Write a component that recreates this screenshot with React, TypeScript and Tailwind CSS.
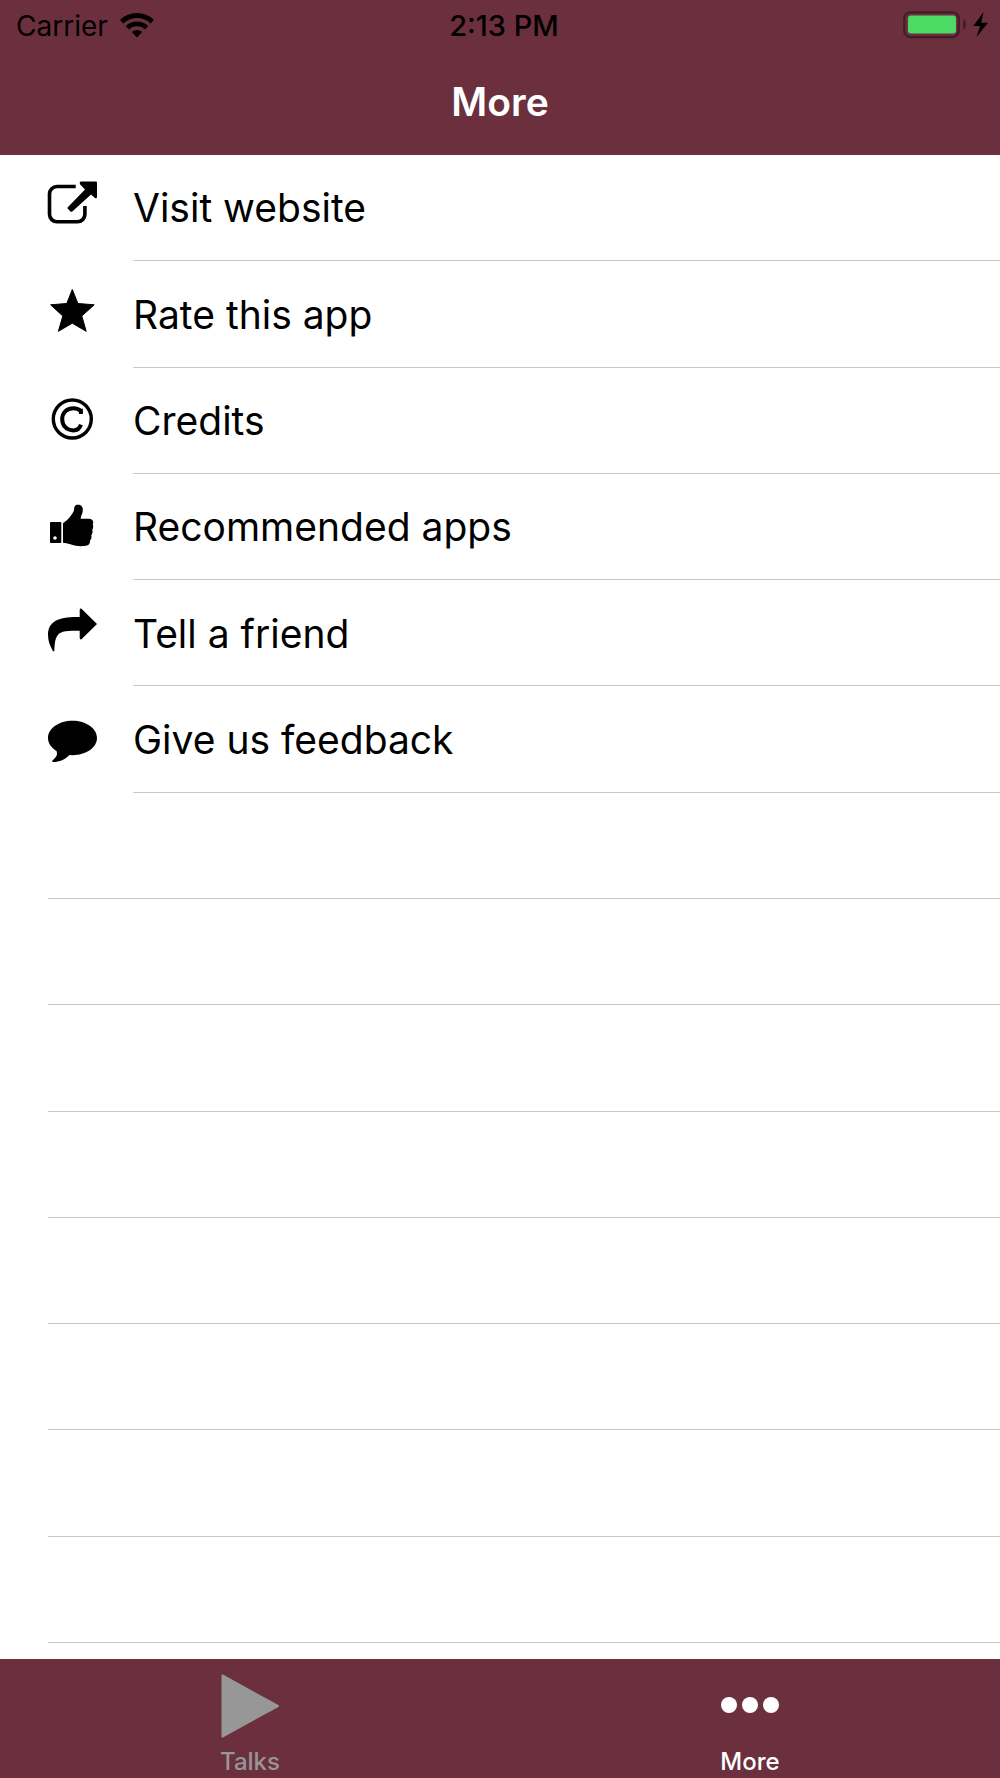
import type { ReactNode } from "react";

interface Item {
  label: string;
  icon: ReactNode;
}

const ITEMS: Item[] = [
  {
    label: "Visit website",
    icon: (
      <>
        <path
          d="M29.7 6.5H11A7.5 7.5 0 0 0 3.5 14V34.3A7.5 7.5 0 0 0 11 41.8H31.4A7.5 7.5 0 0 0 38.9 34.3V26"
          fill="none"
          stroke="currentColor"
          strokeWidth="3.6"
        />
        <path d="M34.8 1.6H50a1 1 0 0 1 1 1V17.2Q50.6 18.8 49 18L45 14.4L26.3 31.6Q24.9 32 24.2 31.2L21.6 28.6Q21.2 27.8 21.8 27.2L39 9.6L34 4.2Q33 2 34.8 1.6Z" />
      </>
    ),
  },
  {
    label: "Rate this app",
    icon: (
      <path
        d="M26.3 3.5L31.9 17.5L48.2 18.8L35.8 30L40.2 45.3L26.3 37.2L12.4 45.3L16.8 30L4.6 18.8L20.8 17.5Z"
        stroke="currentColor"
        strokeLinejoin="round"
      />
    ),
  },
  {
    label: "Credits",
    icon: (
      <g fill="none" stroke="currentColor">
        <circle cx="26.3" cy="26" r="19" strokeWidth="3.4" />
        <path
          d="M34.9 21V15.8M34.9 18.2C33 16 30.3 15.2 27.3 15.2C20.6 15.2 16.2 19.8 16.2 26.2C16.2 32.6 20.6 37.4 27.3 37.4C30.6 37.4 33.6 36 34.9 31.6"
          strokeWidth="4"
        />
      </g>
    ),
  },
  {
    label: "Recommended apps",
    icon: (
      <>
        <path
          fillRule="evenodd"
          d="M5 23H14.3a1 1 0 0 1 1 1V43a1 1 0 0 1-1 1H5a1 1 0 0 1-1-1V24a1 1 0 0 1 1-1ZM9 37.2a1.8 1.8 0 1 0 0 3.6a1.8 1.8 0 0 0 0-3.6Z"
        />
        <path d="M17 24.3C19 22.5 21.5 21 23.3 18.7C25 16.3 27 14 27.8 12C28.3 10 28 8.3 28.8 7.2C30 5.3 34 5.3 35.5 7C37.5 9.3 36.8 12 36.2 14.5C35.5 16.5 34.8 17.5 34.7 19.7H43.5C47 20 47.8 23 46.8 25.5C47.7 27.5 47 29.5 46.3 30.7C47 33 46.3 35 45.3 36.3C45.8 38.5 45.3 40.3 44 41.5C44.3 44.3 43 46 41 46.5C38.5 47.3 33 47.3 30 46.8C25.5 46 21.5 44 17 43.7Z" />
      </>
    ),
  },
  {
    label: "Tell a friend",
    icon: (
      <path d="M33.7 12V5Q33.8 3.2 35.5 3.7L51 19L35.5 34.3Q33.8 34.8 33.7 33V25.8C22 26 15 25.5 11.5 30.5C8.8 34.5 8.7 39 8.3 46.3H7C4 41 2 36 2 30C2 16 13 11.5 33.7 12Z" />
    ),
  },
  {
    label: "Give us feedback",
    icon: (
      <path d="M26.5 8.8C40 8.8 51 16.5 51 26C51 35.5 40 43.2 26.5 43.2L23.5 43C19 47.5 13 50.2 6.5 50Q5.5 49 7 48C10 45.3 12 43 10.5 39C5.2 35.8 2 31.2 2 26C2 16.5 13 8.8 26.5 8.8Z" />
    ),
  },
];

const EMPTY_ROWS = 8;

function WifiIcon() {
  return (
    <svg width="34" height="25" viewBox="0 0 34 25" aria-hidden="true">
      <g fill="none" stroke="currentColor" strokeWidth="4.8">
        <path d="M1.7 8.7A22 22 0 0 1 32.3 8.7" />
        <path d="M7.4 14.8A13.7 13.7 0 0 1 26.6 14.8" />
      </g>
      <path d="M11.8 19.1A7.5 7.5 0 0 1 22.2 19.1L17 24.5Z" />
    </svg>
  );
}

function BatteryIcon() {
  return (
    <svg width="89" height="28" viewBox="0 0 89 28" aria-hidden="true">
      <rect
        x="1.3"
        y="1.3"
        width="54.4"
        height="24.8"
        rx="6"
        fill="none"
        stroke="#431c27"
        strokeWidth="2.2"
      />
      <rect x="5" y="4.5" width="48" height="18" rx="3" fill="#4cd964" />
      <path d="M60 8.3C64 9.8 64 17 60 18.6Z" fill="#431c27" />
      <path d="M80.6 1L70.3 15H77L73.5 26L85 11.7H78.2Z" />
    </svg>
  );
}

function StatusBar() {
  return (
    <div className="grid h-[50px] grid-cols-3 items-center pl-4 pr-2 text-[28px]">
      <div className="flex items-center gap-3">
        <span className="pt-0.5">Carrier</span>
        <WifiIcon />
      </div>
      <span className="pt-0.5 text-center text-[29px] font-medium">
        2:13 PM
      </span>
      <div className="flex justify-end">
        <BatteryIcon />
      </div>
    </div>
  );
}

export default function App() {
  return (
    <div className="flex min-h-screen flex-col bg-white font-['Inter',sans-serif] text-black">
      <header className="bg-[#6b2f3e]">
        <StatusBar />
        <h1 className="flex h-[105px] items-center justify-center text-[39px] font-semibold text-white">
          More
        </h1>
      </header>

      <main className="flex flex-1 flex-col pb-4">
        <ul className="grid flex-1 auto-rows-fr">
          {ITEMS.map((item) => (
            <li key={item.label} className="flex min-h-16">
              <a href="#" className="flex flex-1 items-stretch pl-[46px]">
                <svg
                  width="52"
                  height="56"
                  viewBox="0 0 52 56"
                  fill="currentColor"
                  className="mr-[35px] shrink-0 self-center"
                  aria-hidden="true"
                >
                  {item.icon}
                </svg>
                <span className="flex flex-1 items-center border-b border-[#c8c7cc] pt-0.5 text-[39px]">
                  {item.label}
                </span>
              </a>
            </li>
          ))}
          {Array.from({ length: EMPTY_ROWS }).map((_, i) => (
            <li
              key={i}
              className="ml-12 min-h-16 border-b border-[#c8c7cc]"
              aria-hidden="true"
            />
          ))}
        </ul>
      </main>

      <nav className="grid h-[119px] grid-cols-2 bg-[#6b2f3e] text-2xl font-medium">
        <button className="flex flex-col items-center justify-end text-[#979797]">
          <svg
            width="58"
            height="64"
            viewBox="0 0 58 64"
            fill="currentColor"
            stroke="currentColor"
            strokeWidth="2"
            strokeLinejoin="round"
            aria-hidden="true"
          >
            <path d="M1.5 1.5L57 32L1.5 62.5Z" />
          </svg>
          <span className="mt-2">Talks</span>
        </button>
        <button className="flex flex-col items-center justify-end text-white">
          <svg
            width="58"
            height="64"
            viewBox="0 0 58 64"
            fill="currentColor"
            aria-hidden="true"
          >
            <circle cx="8" cy="31" r="8" />
            <circle cx="29" cy="31" r="8" />
            <circle cx="50" cy="31" r="8" />
          </svg>
          <span className="mt-2">More</span>
        </button>
      </nav>
    </div>
  );
}
